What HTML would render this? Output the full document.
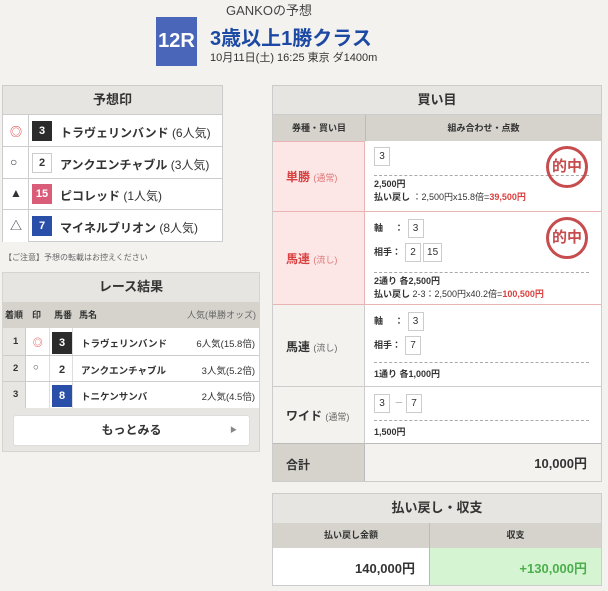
<!DOCTYPE html>
<html><head><meta charset="utf-8"><style>
*{box-sizing:border-box;margin:0;padding:0}
body{width:608px;height:591px;background:#f3f2ef;font-family:"Liberation Sans","Noto Sans CJK JP",sans-serif;color:#333;position:relative;overflow:hidden;font-size:12px}
.a{position:absolute}
.hd{background:#e6e5e1;text-align:center;font-weight:bold;font-size:13px;border-bottom:1px solid #ccc}
.num{position:absolute;width:20px;height:20px;font-size:11px;font-weight:bold;text-align:center;line-height:20px}
.bx{display:inline-block;border:1px solid #ccc;background:#fff;min-width:16px;height:19px;line-height:17px;text-align:center;font-size:10px;padding:0 3px;margin-right:2px}
.dash{border-top:1px dashed #aaa}
.stamp{position:absolute;width:42px;height:42px;border:3px solid #c0393b;border-radius:50%;color:#c0393b;font-weight:bold;font-size:15px;text-align:center;line-height:36px;opacity:.9}
</style></head><body>
<div class="a" style="left:226px;top:0;font-size:13px;color:#444">GANKOの予想</div>
<div class="a" style="left:156px;top:17px;width:41px;height:49px;background:#4a66b9;color:#fff;font-weight:bold;font-size:20px;text-align:center;line-height:49px">12R</div>
<div class="a" style="left:210px;top:22px;font-size:20px;font-weight:bold;color:#1c49a3">3歳以上1勝クラス</div>
<div class="a" style="left:210px;top:49px;font-size:11px;color:#333">10月11日(土) 16:25 東京 ダ1400m</div>

<div class="a" style="left:2px;top:85px;width:221px;height:157px;border:1px solid #ccc;background:#fff">
<div class="hd" style="height:29px;line-height:28px">予想印</div>
<div style="position:relative;height:127px">
<div class="a" style="left:0;top:0;width:26px;height:127px;background:#fff;border-right:1px solid #ccc"></div>
<div class="a" style="left:0;top:31px;width:219px;border-top:1px solid #ccc"></div>
<div class="a" style="left:0;top:63px;width:219px;border-top:1px solid #ccc"></div>
<div class="a" style="left:0;top:94px;width:219px;border-top:1px solid #ccc"></div>
<div class="a" style="left:7px;top:8px;color:#d33;font-size:12px">◎</div>
<div class="a" style="left:7px;top:40px;font-size:12px">○</div>
<div class="a" style="left:7px;top:71px;font-size:12px">▲</div>
<div class="a" style="left:7px;top:102px;font-size:12px">△</div>
<div class="num" style="left:29px;top:6px;background:#2b2b2b;color:#fff">3</div>
<div class="num" style="left:29px;top:38px;border:1px solid #ccc;line-height:18px">2</div>
<div class="num" style="left:29px;top:69px;background:#d95c78;color:#fff">15</div>
<div class="num" style="left:29px;top:101px;background:#2a4fa8;color:#fff">7</div>
<div class="a" style="left:57px;top:9px;font-size:12px;font-weight:bold">トラヴェリンバンド <span style="font-weight:normal">(6人気)</span></div>
<div class="a" style="left:57px;top:41px;font-size:12px;font-weight:bold">アンクエンチャブル <span style="font-weight:normal">(3人気)</span></div>
<div class="a" style="left:57px;top:72px;font-size:12px;font-weight:bold">ピコレッド <span style="font-weight:normal">(1人気)</span></div>
<div class="a" style="left:57px;top:104px;font-size:12px;font-weight:bold">マイネルブリオン <span style="font-weight:normal">(8人気)</span></div>
</div></div>
<div class="a" style="left:4px;top:252px;font-size:8px;color:#666">【ご注意】予想の転載はお控えください</div>

<div class="a" style="left:2px;top:272px;width:258px;height:180px;border:1px solid #d6d4cf;background:#e8e6e2">
<div class="hd" style="height:29px;line-height:28px;border-bottom:none">レース結果</div>
<div style="position:relative;height:26px;background:#d6d3cd;font-size:9px;font-weight:bold;line-height:26px">
<span class="a" style="left:2px">着順</span><span class="a" style="left:29px">印</span><span class="a" style="left:51px">馬番</span><span class="a" style="left:76px">馬名</span><span class="a" style="right:3px;font-weight:normal;color:#666">人気(単勝オッズ)</span></div>
<div style="position:relative;height:80px;font-size:9.5px">
<div class="a" style="left:0;top:0;width:256px;height:80px;background:#fff"></div>
<div class="a" style="left:0;top:0;width:23px;height:80px;background:#e8e6e2;border-right:1px solid #ccc"></div>
<div class="a" style="left:46px;top:0;height:80px;border-left:1px solid #ddd"></div>
<div class="a" style="left:69px;top:0;height:80px;border-left:1px solid #ddd"></div>
<div class="a" style="left:0;top:27px;width:256px;border-top:1px solid #ccc"></div>
<div class="a" style="left:0;top:53px;width:256px;border-top:1px solid #ccc"></div>
<span class="a" style="left:10px;top:8px;font-weight:bold">1</span><span class="a" style="left:10px;top:35px;font-weight:bold">2</span><span class="a" style="left:10px;top:61px;font-weight:bold">3</span>
<span class="a" style="left:30px;top:7px;color:#d33">◎</span><span class="a" style="left:30px;top:34px">○</span>
<div class="num" style="left:49px;top:4px;background:#2b2b2b;color:#fff;height:22px;line-height:22px">3</div>
<div class="num" style="left:49px;top:31px;line-height:22px">2</div>
<div class="num" style="left:49px;top:57px;background:#2a4fa8;color:#fff;height:22px;line-height:22px">8</div>
<span class="a" style="left:78px;top:8px;font-weight:bold">トラヴェリンバンド</span>
<span class="a" style="left:78px;top:35px;font-weight:bold">アンクエンチャブル</span>
<span class="a" style="left:78px;top:61px;font-weight:bold">トニケンサンバ</span>
<span class="a" style="right:4px;top:8px">6人気(15.8倍)</span>
<span class="a" style="right:4px;top:35px">3人気(5.2倍)</span>
<span class="a" style="right:4px;top:61px">2人気(4.5倍)</span>
</div>
<div class="a" style="left:10px;top:142px;width:237px;height:31px;background:#fff;border:1px solid #ddd;border-radius:3px;text-align:center;line-height:29px;font-size:12px;font-weight:bold">もっとみる<span class="a" style="right:12px;top:0;font-size:7px;color:#888">▶</span></div>
</div>

<div class="a" style="left:272px;top:85px;width:330px;height:397px;border:1px solid #ccc;background:#fff">
<div class="hd" style="height:29px;line-height:28px">買い目</div>
<div style="position:relative;height:26px;background:#d6d3cd;font-size:9px;font-weight:bold;line-height:26px">
<span class="a" style="left:0;width:92px;text-align:center">券種・買い目</span><span class="a" style="left:92px;width:236px;text-align:center;border-left:1px solid #bbb;height:26px">組み合わせ・点数</span></div>
<div class="a" style="left:0;top:55px;width:92px;height:71px;background:#fde6e6;border:1px solid #e8b4b4;border-left:none"></div>
<div class="a" style="left:92px;top:55px;width:236px;height:71px;border-bottom:1px solid #e8b4b4"></div>
<div class="a" style="left:13px;top:82px;color:#d94040;font-size:12px;font-weight:bold">単勝 <span style="font-size:9px;font-weight:normal;color:#d77">(通常)</span></div>
<div class="a" style="left:101px;top:61px"><span class="bx">3</span></div>
<div class="a dash" style="left:101px;top:89px;width:215px"></div>
<div class="a" style="left:101px;top:92px;font-size:9px;font-weight:bold;line-height:13px">2,500円<br>払い戻し <span style="font-weight:normal">：2,500円x15.8倍=</span><span style="color:#d94040">39,500円</span></div>
<div class="a" style="left:0;top:126px;width:92px;height:93px;background:#fde6e6;border-right:1px solid #e8b4b4;border-bottom:1px solid #e8b4b4"></div>
<div class="a" style="left:92px;top:126px;width:236px;height:93px;border-bottom:1px solid #e8b4b4"></div>
<div class="a" style="left:13px;top:164px;color:#d94040;font-size:12px;font-weight:bold">馬連 <span style="font-size:9px;font-weight:normal;color:#d77">(流し)</span></div>
<div class="a" style="left:101px;top:133px;font-size:9px;font-weight:bold">軸 　：<span class="bx" style="margin-left:4px;font-weight:normal">3</span></div>
<div class="a" style="left:101px;top:157px;font-size:9px;font-weight:bold">相手：<span class="bx" style="margin-left:4px;font-weight:normal">2</span><span class="bx" style="font-weight:normal">15</span></div>
<div class="a dash" style="left:101px;top:186px;width:215px"></div>
<div class="a" style="left:101px;top:189px;font-size:9px;font-weight:bold;line-height:13px">2通り 各2,500円<br>払い戻し <span style="font-weight:normal">2-3：2,500円x40.2倍=</span><span style="color:#d94040">100,500円</span></div>
<div class="a" style="left:0;top:219px;width:92px;height:82px;background:#f3f2ef;border-right:1px solid #ccc;border-bottom:1px solid #ccc"></div>
<div class="a" style="left:92px;top:219px;width:236px;height:82px;border-bottom:1px solid #ccc"></div>
<div class="a" style="left:13px;top:252px;font-size:12px;font-weight:bold">馬連 <span style="font-size:9px;font-weight:normal;color:#666">(流し)</span></div>
<div class="a" style="left:101px;top:226px;font-size:9px;font-weight:bold">軸 　：<span class="bx" style="margin-left:4px;font-weight:normal">3</span></div>
<div class="a" style="left:101px;top:250px;font-size:9px;font-weight:bold">相手：<span class="bx" style="margin-left:4px;font-weight:normal">7</span></div>
<div class="a dash" style="left:101px;top:276px;width:215px"></div>
<div class="a" style="left:101px;top:281px;font-size:9px;font-weight:bold">1通り 各1,000円</div>
<div class="a" style="left:0;top:301px;width:92px;height:57px;background:#f3f2ef;border-right:1px solid #ccc;border-bottom:1px solid #bbb"></div>
<div class="a" style="left:92px;top:301px;width:236px;height:57px;border-bottom:1px solid #bbb"></div>
<div class="a" style="left:13px;top:321px;font-size:12px;font-weight:bold">ワイド <span style="font-size:9px;font-weight:normal;color:#666">(通常)</span></div>
<div class="a" style="left:101px;top:308px;font-size:9px"><span class="bx">3</span> <span style="color:#999">－</span> <span class="bx">7</span></div>
<div class="a dash" style="left:101px;top:334px;width:215px"></div>
<div class="a" style="left:101px;top:339px;font-size:9px;font-weight:bold">1,500円</div>
<div class="a" style="left:0;top:358px;width:92px;height:37px;background:#d6d3cd;border-right:1px solid #bbb"></div>
<div class="a" style="left:92px;top:358px;width:236px;height:37px;background:#f3f2ef"></div>
<div class="a" style="left:13px;top:370px;font-size:12px;font-weight:bold">合計</div>
<div class="a" style="right:14px;top:367px;font-size:13px;font-weight:bold">10,000円</div>
<div class="stamp" style="left:273px;top:60px">的中</div>
<div class="stamp" style="left:273px;top:131px">的中</div>
</div>

<div class="a" style="left:272px;top:493px;width:330px;height:93px;border:1px solid #ccc;background:#fff">
<div class="hd" style="height:29px;line-height:28px;border-bottom:none">払い戻し・収支</div>
<div style="position:relative;height:25px;background:#d6d3cd;font-size:9px;font-weight:bold;line-height:25px">
<span class="a" style="left:0;width:156px;text-align:center">払い戻し金額</span><span class="a" style="left:156px;width:172px;text-align:center;border-left:1px solid #bbb;height:25px">収支</span></div>
<div class="a" style="left:156px;top:54px;width:172px;height:37px;background:#d5f5d2;border-left:1px solid #bbb"></div>
<div class="a" style="right:186px;top:64px;font-size:13px;font-weight:bold">140,000円</div>
<div class="a" style="right:14px;top:64px;font-size:13px;font-weight:bold;color:#4cae4c">+130,000円</div>
</div>
</body></html>
